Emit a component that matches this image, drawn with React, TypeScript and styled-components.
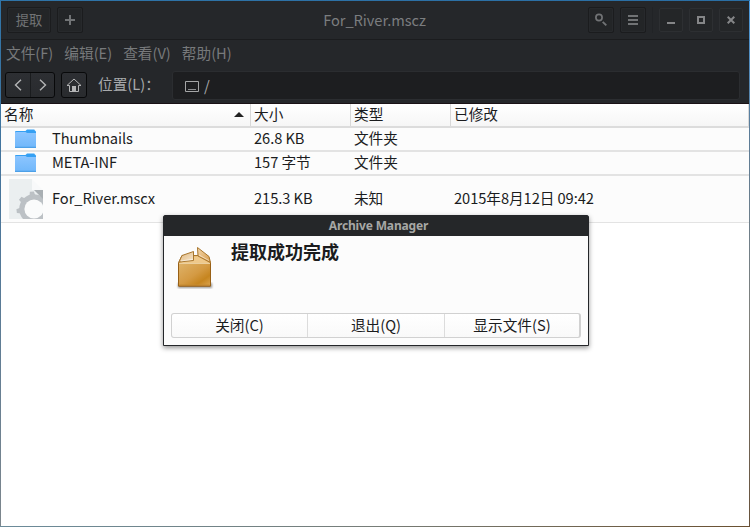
import React from "react";
import styled, { createGlobalStyle, css } from "styled-components";

const GlobalStyle = createGlobalStyle`
  * { box-sizing: border-box; }
  body { margin: 0; overflow: hidden; }
  button { font: inherit; margin: 0; padding: 0; }
`;

const WindowFrame = styled.div`
  position: relative;
  width: 750px;
  height: 527px;
  padding: 1px;
  background:
    linear-gradient(90deg, #2f74a8, #2a6ea4) top / 100% 1px no-repeat,
    linear-gradient(90deg, #6b8b9a, #777d78 50%, #6a5030) bottom / 100% 1px no-repeat,
    linear-gradient(180deg, #2f74a8, #47759c 35%, #7d868c) left / 1px 100% no-repeat,
    linear-gradient(180deg, #4a9be0, #5b7c98 25%, #80817d 60%, #665039) right / 1px 100% no-repeat;
  font-family: "Noto Sans CJK SC", "Noto Sans", sans-serif;
  font-size: 14.67px;
  line-height: 22px;
  color: #1b1c1e;
  white-space: nowrap;
`;

const WindowBody = styled.div`
  display: flex;
  flex-direction: column;
  height: 525px;
  background: #fff;
`;

const TitleBar = styled.header`
  display: grid;
  grid-template-columns: 1fr auto 1fr;
  height: 39px;
  padding: 6px 6px 0;
  background: #25272a;
  border-bottom: 1px solid #1b1c1e;
  color: #727476;
`;

const Title = styled.div`
  padding: 2px 1px 0 0;
  color: #7b7d7f;
  letter-spacing: -0.05px;
`;

const ButtonGroup = styled.div<{ $end?: boolean }>`
  display: flex;
  gap: 6px;
  justify-content: ${(p) => (p.$end ? "flex-end" : "flex-start")};
`;

const ToolButton = styled.button<{ $width?: number }>`
  display: flex;
  align-items: center;
  justify-content: center;
  width: ${(p) => p.$width ?? 26}px;
  height: 26px;
  border: 1px solid #1b1c1e;
  border-radius: 2px;
  background: #232527;
  box-shadow: inset 0 0 0 1px #27292c;
  color: #717375;
  font-size: 13.33px;
  line-height: 22px;
`;

const Divider = styled.span`
  width: 1px;
  height: 26px;
  background: #212326;
`;

const FrameButton = styled.button`
  display: flex;
  align-items: center;
  justify-content: center;
  width: 24px;
  height: 24px;
  margin: 1px 0;
  border: 1px solid #2d2f32;
  border-radius: 2px;
  background: #242628;
  color: #858688;
`;

const MenuBar = styled.nav`
  display: flex;
  gap: 11px;
  height: 30px;
  padding: 2px 0 0 5px;
  background: #25272a;
  color: #77797b;
`;

const LocationBar = styled.div`
  display: flex;
  height: 34px;
  padding: 2px 0 0 4px;
  background: #25272a;
  border-bottom: 1px solid #1a1216;
  color: #a8aaac;
`;

const NavGroup = styled.div`
  display: flex;
  height: 26px;
  margin-right: 6px;
  border: 1px solid #08090a;
  border-radius: 3px;
  background: linear-gradient(#2d2f33, #292b2e);
  overflow: hidden;
`;

const NavButton = styled.button<{ $divided?: boolean }>`
  display: flex;
  align-items: center;
  justify-content: center;
  width: 24px;
  height: 24px;
  border: 0;
  background: none;
  color: #b4b5b6;
  ${(p) => p.$divided && css`border-left: 1px solid #1a1c1e;`}
`;

const LocationLabel = styled.label`
  flex: none;
  width: 79px;
  padding: 1px 0 0 5px;
`;

const LocationField = styled.div`
  display: flex;
  align-items: center;
  gap: 5px;
  width: 568px;
  height: 29px;
  margin-top: -1px;
  padding-left: 12px;
  border: 1px solid #2b2d30;
  border-radius: 3px;
  background: #1d1e20;
`;

const FileTable = styled.div`
  display: flex;
  flex-direction: column;
`;

const HeaderRow = styled.div`
  display: grid;
  grid-template-columns: 250px 100px 100px 1fr;
  height: 24px;
  background: linear-gradient(#fff, #f6f6f6);
  border-bottom: 2px solid #dcdcdc;
`;

const HeaderCell = styled.div`
  display: flex;
  align-items: center;
  justify-content: space-between;
  height: 22px;
  padding: 0 6px 3px 3px;
  border-right: 1px solid #d8d8d8;
`;

const SortArrow = styled.svg`
  margin-top: 1px;
`;

const FileRow = styled.div<{ $tall?: boolean }>`
  display: grid;
  grid-template-columns: 50px 200px 100px 100px 1fr;
  align-items: center;
  height: ${(p) => (p.$tall ? 47 : 24)}px;
  background: #fcfcfc;
  border-bottom: ${(p) => (p.$tall ? 1 : 2)}px solid #e3e3e3;
  letter-spacing: -0.06px;
`;

const Cell = styled.div<{ $name?: boolean }>`
  height: 22px;
  margin-top: -2px;
  padding-left: ${(p) => (p.$name ? 1 : 3)}px;
`;

const IconCell = styled.div<{ $large?: boolean }>`
  display: flex;
  height: ${(p) => (p.$large ? 40 : 20)}px;
  padding-left: ${(p) => (p.$large ? 8 : 14)}px;
`;

const Dialog = styled.section`
  position: absolute;
  left: 163px;
  top: 215px;
  width: 426px;
  height: 131px;
  display: flex;
  flex-direction: column;
  border: 1px solid #242629;
  border-radius: 2px 2px 0 0;
  background: #fcfcfc;
  box-shadow: 0 2px 5px rgba(0, 0, 0, 0.42);
`;

const DialogTitle = styled.header`
  height: 20px;
  flex: none;
  padding-left: 5px;
  background: #252729;
  color: #a7a7a5;
  font: bold 12px/19px "Noto Sans", sans-serif;
  letter-spacing: -0.15px;
  text-align: center;
`;

const DialogContent = styled.div`
  display: flex;
  height: 77px;
  padding: 7px 0 0 11px;
`;

const Message = styled.h1`
  margin: -5px 0 0 16px;
  font-size: 18px;
  line-height: 27px;
  font-weight: bold;
`;

const DialogActions = styled.div`
  display: grid;
  grid-template-columns: 136px 137px 1fr;
  width: 410px;
  height: 25px;
  margin-left: 7px;
  border: 1px solid #d1d1d1;
  border-right-width: 2px;
  border-radius: 3px;
  background: linear-gradient(#fff, #f9f9f9);
`;

const DialogButton = styled.button`
  height: 23px;
  padding-bottom: 2px;
  border: 0;
  border-right: 1px solid #dcdcdc;
  background: none;
  color: #1b1c1e;
  line-height: 21px;
  &:last-child { border-right: 0; }
`;

const FolderIcon = () => (
  <svg width="21" height="20" viewBox="0 0 21 20">
    <defs>
      <linearGradient id="folder" x2="0" y2="1">
        <stop stopColor="#8cc5ff" />
        <stop offset="1" stopColor="#70b7fa" />
      </linearGradient>
    </defs>
    <path d="M0 3q0-1 1-1h9.500L12 .5h7q.8 0 .8 1Q21 1.500 21 3v4H0z" fill="#35a0f3" />
    <path d="M0 4q0-1 1-1h9.500L12 4h9v14.800H0z" fill="url(#folder)" />
    <path d="M0 17.800h21v1H0z" fill="#3d97e3" />
  </svg>
);

const UnknownFileIcon = () => (
  <svg width="34" height="40" viewBox="0 0 34 40">
    <defs>
      <clipPath id="page"><path d="M0 0h23l11 11v29H0z" /></clipPath>
    </defs>
    <path d="M0 0h23v11h11v29H0z" fill="#ebeff0" />
    <g clipPath="url(#page)">
      <circle cx="25" cy="30" r="14.800" fill="#bcc1c5" />
      <g fill="#bcc1c5">
        {[-97, -50, -142, 173, 128].map((angle) => (
          <path key={angle} d="M38 27l4.500 1v4l-4.500 1z" transform={`rotate(${angle} 25 30)`} />
        ))}
      </g>
      <path d="M25 11h9v9z" fill="#a9afb3" />
      <circle cx="25" cy="30" r="9.600" fill="#fafbfb" />
    </g>
    <path d="M23 0l11 11H23z" fill="#f8f9fa" />
  </svg>
);

const PackageIcon = () => (
  <svg width="40" height="48" viewBox="0 0 40 48">
    <defs>
      <linearGradient id="box" x1="0" y1="0" x2="1" y2="1">
        <stop offset="0" stopColor="#deb269" />
        <stop offset=".5" stopColor="#d49a43" />
        <stop offset=".75" stopColor="#c6851f" />
        <stop offset="1" stopColor="#dca550" />
      </linearGradient>
      <linearGradient id="flapLeft" x2="1" y2="1">
        <stop stopColor="#dfb67c" />
        <stop offset="1" stopColor="#f6e6cd" />
      </linearGradient>
      <linearGradient id="flapRight" x2="1" y2="1">
        <stop stopColor="#f3d7ac" />
        <stop offset="1" stopColor="#d79a48" />
      </linearGradient>
      <filter id="shade"><feGaussianBlur stdDeviation="1" /></filter>
    </defs>
    <path d="M3 40h34v5H3z" fill="#000" opacity=".4" filter="url(#shade)" />
    <path d="M3.500 20L7 12.500h25l3.500 7.500v23h-32z" fill="#e5b66c" stroke="#986016" />
    <path d="M19 13.500h5L34 20H6z" fill="#efc98b" />
    <path d="M3.500 20.500h32v22.500h-32z" fill="url(#box)" stroke="#986016" />
    <path d="M4 20.500h31" stroke="#ebcf9e" />
    <path d="M4 19l3-6.500L18.500 8.500v9z" fill="url(#flapLeft)" stroke="#a8762d" strokeLinejoin="round" />
    <path d="M22.500 4.500L34 13.500l1.500 6L23 13z" fill="url(#flapRight)" stroke="#a8762d" strokeLinejoin="round" />
    <path d="M19 12.500h4" stroke="#a8762d" />
    <path d="M4.500 42h30" stroke="#c58a35" />
    <path d="M6 18l12-1.700M24 12l10 5.500" fill="none" stroke="#fff" opacity=".5" />
  </svg>
);

const menus = ["文件(F)", "编辑(E)", "查看(V)", "帮助(H)"];

const files = [
  { name: "Thumbnails", size: "26.8 KB", type: "文件夹", modified: "", unknown: false },
  { name: "META-INF", size: "157 字节", type: "文件夹", modified: "", unknown: false },
  { name: "For_River.mscx", size: "215.3 KB", type: "未知", modified: "2015年8月12日 09:42", unknown: true },
];

export default function App() {
  return (
    <>
      <GlobalStyle />
      <WindowFrame>
        <WindowBody>
          <TitleBar>
            <ButtonGroup>
              <ToolButton $width={44}>提取</ToolButton>
              <ToolButton aria-label="添加">
                <svg width="10" height="10" viewBox="0 0 10 10">
                  <path d="M4 0h2v4h4v2H6v4H4V6H0V4h4z" fill="currentColor" />
                </svg>
              </ToolButton>
            </ButtonGroup>
            <Title>For_River.mscz</Title>
            <ButtonGroup $end>
              <ToolButton aria-label="搜索">
                <svg width="14" height="14" viewBox="0 0 14 14">
                  <circle cx="5" cy="4.500" r="3.100" fill="none" stroke="currentColor" strokeWidth="1.700" />
                  <path d="M8.700 8.800l3.600 3.600" stroke="currentColor" strokeWidth="1.900" />
                </svg>
              </ToolButton>
              <ToolButton aria-label="菜单">
                <svg width="10" height="10" viewBox="0 0 10 10">
                  <path d="M0 0h10v2H0zM0 4h10v2H0zM0 8h10v2H0z" fill="currentColor" />
                </svg>
              </ToolButton>
              <Divider />
              <FrameButton aria-label="最小化">
                <svg width="8" height="8" viewBox="0 0 8 8"><path d="M0 6h8v2H0z" fill="currentColor" /></svg>
              </FrameButton>
              <FrameButton aria-label="最大化">
                <svg width="8" height="8" viewBox="0 0 8 8"><path d="M1 1h6v6H1z" fill="none" stroke="currentColor" strokeWidth="2" /></svg>
              </FrameButton>
              <FrameButton aria-label="关闭">
                <svg width="8" height="8" viewBox="0 0 8 8"><path d="M.7.7l6.600 6.600M7.300.7L.7 7.300" stroke="currentColor" strokeWidth="2" /></svg>
              </FrameButton>
            </ButtonGroup>
          </TitleBar>
          <MenuBar>{menus.map((m) => <span key={m}>{m}</span>)}</MenuBar>
          <LocationBar>
            <NavGroup>
              <NavButton aria-label="后退">
                <svg width="8" height="12" viewBox="0 0 8 12"><path d="M7 .7L1.500 6 7 11.300" fill="none" stroke="currentColor" strokeWidth="1.400" /></svg>
              </NavButton>
              <NavButton $divided aria-label="前进">
                <svg width="8" height="12" viewBox="0 0 8 12"><path d="M1 .7L6.500 6 1 11.300" fill="none" stroke="currentColor" strokeWidth="1.400" /></svg>
              </NavButton>
            </NavGroup>
            <NavGroup>
              <NavButton aria-label="主目录">
                <svg width="16" height="15" viewBox="0 0 16 15">
                  <path d="M1 7.500L8 1l7 6.500h-2.500v6h-9v-6z" fill="none" stroke="currentColor" />
                  <path d="M6 8h4v5H6z" fill="currentColor" />
                </svg>
              </NavButton>
            </NavGroup>
            <LocationLabel>位置(L)：</LocationLabel>
            <LocationField>
              <svg width="14" height="12" viewBox="0 0 14 12">
                <path d="M.5 1.500h13v10H.5z" fill="none" stroke="#a5a6a7" />
                <path d="M3 9.500h8" stroke="#8e8f91" />
              </svg>
              <span>/</span>
            </LocationField>
          </LocationBar>
          <FileTable>
            <HeaderRow>
              <HeaderCell>
                名称
                <SortArrow width="10" height="5" viewBox="0 0 10 5"><path d="M0 5l5-5 5 5z" fill="#222" /></SortArrow>
              </HeaderCell>
              <HeaderCell>大小</HeaderCell>
              <HeaderCell>类型</HeaderCell>
              <HeaderCell>已修改</HeaderCell>
            </HeaderRow>
            {files.map((f) => (
              <FileRow key={f.name} $tall={f.unknown}>
                <IconCell $large={f.unknown}>{f.unknown ? <UnknownFileIcon /> : <FolderIcon />}</IconCell>
                <Cell $name>{f.name}</Cell>
                <Cell>{f.size}</Cell>
                <Cell>{f.type}</Cell>
                <Cell>{f.modified}</Cell>
              </FileRow>
            ))}
          </FileTable>
        </WindowBody>
        <Dialog>
          <DialogTitle>Archive Manager</DialogTitle>
          <DialogContent>
            <PackageIcon />
            <Message>提取成功完成</Message>
          </DialogContent>
          <DialogActions>
            <DialogButton>关闭(C)</DialogButton>
            <DialogButton>退出(Q)</DialogButton>
            <DialogButton>显示文件(S)</DialogButton>
          </DialogActions>
        </Dialog>
      </WindowFrame>
    </>
  );
}
